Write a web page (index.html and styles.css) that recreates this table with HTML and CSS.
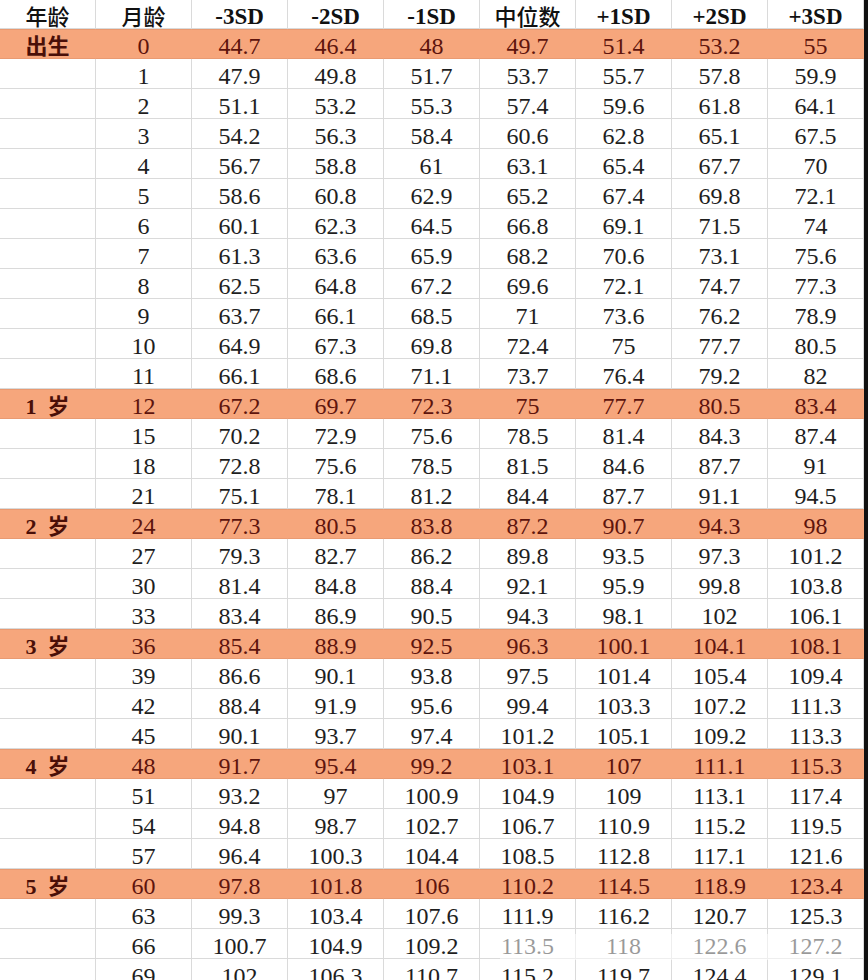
FILE: index.html
```html
<!DOCTYPE html>
<html lang="zh-CN">
<head>
<meta charset="utf-8">
<title>身长标准</title>
<link rel="stylesheet" href="styles.css">
</head>
<body>
<div class="sheet">
  <div class="row head"><div class="cjk">年龄</div><div class="cjk">月龄</div><div>-3SD</div><div>-2SD</div><div>-1SD</div><div class="cjk">中位数</div><div>+1SD</div><div>+2SD</div><div>+3SD</div></div>
  <div class="row hl"><div class="age">出生</div><div>0</div><div>44.7</div><div>46.4</div><div>48</div><div>49.7</div><div>51.4</div><div>53.2</div><div>55</div></div>
  <div class="row"><div></div><div>1</div><div>47.9</div><div>49.8</div><div>51.7</div><div>53.7</div><div>55.7</div><div>57.8</div><div>59.9</div></div>
  <div class="row"><div></div><div>2</div><div>51.1</div><div>53.2</div><div>55.3</div><div>57.4</div><div>59.6</div><div>61.8</div><div>64.1</div></div>
  <div class="row"><div></div><div>3</div><div>54.2</div><div>56.3</div><div>58.4</div><div>60.6</div><div>62.8</div><div>65.1</div><div>67.5</div></div>
  <div class="row"><div></div><div>4</div><div>56.7</div><div>58.8</div><div>61</div><div>63.1</div><div>65.4</div><div>67.7</div><div>70</div></div>
  <div class="row"><div></div><div>5</div><div>58.6</div><div>60.8</div><div>62.9</div><div>65.2</div><div>67.4</div><div>69.8</div><div>72.1</div></div>
  <div class="row"><div></div><div>6</div><div>60.1</div><div>62.3</div><div>64.5</div><div>66.8</div><div>69.1</div><div>71.5</div><div>74</div></div>
  <div class="row"><div></div><div>7</div><div>61.3</div><div>63.6</div><div>65.9</div><div>68.2</div><div>70.6</div><div>73.1</div><div>75.6</div></div>
  <div class="row"><div></div><div>8</div><div>62.5</div><div>64.8</div><div>67.2</div><div>69.6</div><div>72.1</div><div>74.7</div><div>77.3</div></div>
  <div class="row"><div></div><div>9</div><div>63.7</div><div>66.1</div><div>68.5</div><div>71</div><div>73.6</div><div>76.2</div><div>78.9</div></div>
  <div class="row"><div></div><div>10</div><div>64.9</div><div>67.3</div><div>69.8</div><div>72.4</div><div>75</div><div>77.7</div><div>80.5</div></div>
  <div class="row"><div></div><div>11</div><div>66.1</div><div>68.6</div><div>71.1</div><div>73.7</div><div>76.4</div><div>79.2</div><div>82</div></div>
  <div class="row hl"><div class="age">1&nbsp;&nbsp;岁</div><div>12</div><div>67.2</div><div>69.7</div><div>72.3</div><div>75</div><div>77.7</div><div>80.5</div><div>83.4</div></div>
  <div class="row"><div></div><div>15</div><div>70.2</div><div>72.9</div><div>75.6</div><div>78.5</div><div>81.4</div><div>84.3</div><div>87.4</div></div>
  <div class="row"><div></div><div>18</div><div>72.8</div><div>75.6</div><div>78.5</div><div>81.5</div><div>84.6</div><div>87.7</div><div>91</div></div>
  <div class="row"><div></div><div>21</div><div>75.1</div><div>78.1</div><div>81.2</div><div>84.4</div><div>87.7</div><div>91.1</div><div>94.5</div></div>
  <div class="row hl"><div class="age">2&nbsp;&nbsp;岁</div><div>24</div><div>77.3</div><div>80.5</div><div>83.8</div><div>87.2</div><div>90.7</div><div>94.3</div><div>98</div></div>
  <div class="row"><div></div><div>27</div><div>79.3</div><div>82.7</div><div>86.2</div><div>89.8</div><div>93.5</div><div>97.3</div><div>101.2</div></div>
  <div class="row"><div></div><div>30</div><div>81.4</div><div>84.8</div><div>88.4</div><div>92.1</div><div>95.9</div><div>99.8</div><div>103.8</div></div>
  <div class="row"><div></div><div>33</div><div>83.4</div><div>86.9</div><div>90.5</div><div>94.3</div><div>98.1</div><div>102</div><div>106.1</div></div>
  <div class="row hl"><div class="age">3&nbsp;&nbsp;岁</div><div>36</div><div>85.4</div><div>88.9</div><div>92.5</div><div>96.3</div><div>100.1</div><div>104.1</div><div>108.1</div></div>
  <div class="row"><div></div><div>39</div><div>86.6</div><div>90.1</div><div>93.8</div><div>97.5</div><div>101.4</div><div>105.4</div><div>109.4</div></div>
  <div class="row"><div></div><div>42</div><div>88.4</div><div>91.9</div><div>95.6</div><div>99.4</div><div>103.3</div><div>107.2</div><div>111.3</div></div>
  <div class="row"><div></div><div>45</div><div>90.1</div><div>93.7</div><div>97.4</div><div>101.2</div><div>105.1</div><div>109.2</div><div>113.3</div></div>
  <div class="row hl"><div class="age">4&nbsp;&nbsp;岁</div><div>48</div><div>91.7</div><div>95.4</div><div>99.2</div><div>103.1</div><div>107</div><div>111.1</div><div>115.3</div></div>
  <div class="row"><div></div><div>51</div><div>93.2</div><div>97</div><div>100.9</div><div>104.9</div><div>109</div><div>113.1</div><div>117.4</div></div>
  <div class="row"><div></div><div>54</div><div>94.8</div><div>98.7</div><div>102.7</div><div>106.7</div><div>110.9</div><div>115.2</div><div>119.5</div></div>
  <div class="row"><div></div><div>57</div><div>96.4</div><div>100.3</div><div>104.4</div><div>108.5</div><div>112.8</div><div>117.1</div><div>121.6</div></div>
  <div class="row hl"><div class="age">5&nbsp;&nbsp;岁</div><div>60</div><div>97.8</div><div>101.8</div><div>106</div><div>110.2</div><div>114.5</div><div>118.9</div><div>123.4</div></div>
  <div class="row"><div></div><div>63</div><div>99.3</div><div>103.4</div><div>107.6</div><div>111.9</div><div>116.2</div><div>120.7</div><div>125.3</div></div>
  <div class="row"><div></div><div>66</div><div>100.7</div><div>104.9</div><div>109.2</div><div>113.5</div><div>118</div><div>122.6</div><div>127.2</div></div>
  <div class="row"><div></div><div>69</div><div>102</div><div>106.3</div><div>110.7</div><div>115.2</div><div>119.7</div><div>124.4</div><div>129.1</div></div>
  <div class="mark"></div>
</div>
</body>
</html>
```
FILE: styles.css
```css
html, body {
  margin: 0;
  padding: 0;
  background: #111;
  height: 980px;
  overflow: hidden;
}

.sheet {
  position: relative;
  width: 864px;
  background: #fff;
  font-family: "Liberation Serif", "Noto Sans CJK SC", serif;
  font-size: 24px;
  color: #1e1e1e;
}

.row {
  display: grid;
  grid-template-columns: repeat(9, 96px);
  height: 30px;
}

.row > div {
  box-sizing: border-box;
  border-right: 1px solid #dadada;
  border-bottom: 1px solid #dadada;
  display: flex;
  align-items: center;
  justify-content: center;
  padding-top: 5px;
  line-height: 1;
  white-space: pre;
}

.head {
  height: 29px;
}

.head > div {
  font-size: 23px;
  font-weight: 600;
  color: #111;
  padding-top: 4px;
}

.head > .cjk {
  font-family: "Noto Sans CJK SC", sans-serif;
  font-weight: 500;
  font-size: 22px;
  padding-top: 2px;
}

.hl {
  background: #f6a67c;
}

.hl > div {
  color: #5e140c;
  border-right-color: #f6a67c;
  border-bottom-color: #e99a72;
  border-top: 1px solid #e99a72;
  padding-top: 4px;
}

.row > .age {
  font-family: "Liberation Serif", "Noto Sans CJK SC", serif;
  font-size: 22px;
  font-weight: bold;
  color: #4a0f08;
  padding-top: 6px;
}

.mark {
  position: absolute;
  left: 500px;
  top: 934px;
  width: 350px;
  height: 26px;
  background: rgba(255, 255, 255, 0.55);
}
```
